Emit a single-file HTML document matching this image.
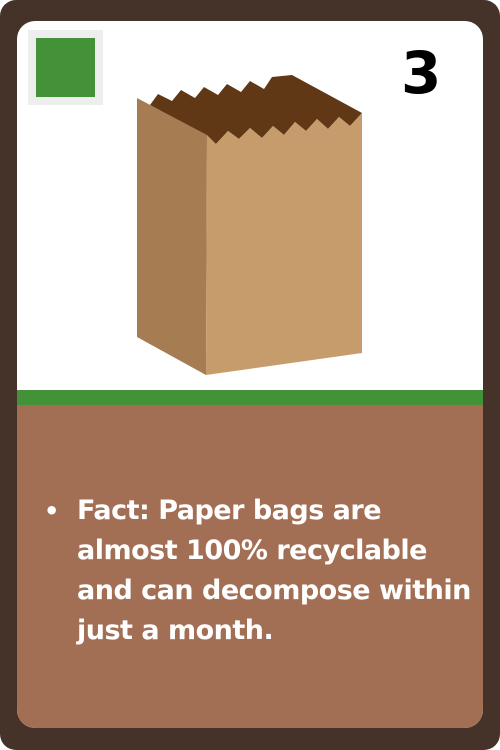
<!DOCTYPE html>
<html><head><style>
html,body{margin:0;padding:0;width:500px;height:750px;overflow:hidden;background:#fff}
.card{position:absolute;left:0;top:0;width:500px;height:750px;background:#45332a;border-radius:16px}
.inner{position:absolute;left:17px;top:21px;width:466px;height:707px;background:#fff;border-radius:18px;overflow:hidden}
.green{position:absolute;left:0;top:369px;width:466px;height:15px;background:#439238}
.bottom{position:absolute;left:0;top:384px;width:466px;height:330px;background:#a36f54}
.sq{position:absolute;left:11px;top:9px;width:75px;height:75px;background:#eeeeee}
.sq div{position:absolute;left:8px;top:8px;width:59px;height:59px;background:#439238}
.num{position:absolute;left:384px;top:22px;font:bold 58px "DejaVu Sans",sans-serif;color:#000;line-height:60px}
.txt{position:absolute;left:60px;top:470px;width:410px;color:#fff;font:bold 27px/40px "DejaVu Sans",sans-serif;letter-spacing:-0.5px}
.bul{position:absolute;left:27px;top:470px;color:#fff;font:bold 24px/40px "DejaVu Sans",sans-serif}
</style></head><body>
<div class="card"><div class="inner">
<div class="sq"><div></div></div>
<div class="num">3</div>
<svg style="position:absolute;left:-17px;top:-21px" width="500" height="420">
<polygon points="150,105 158,94 172,101 181,90 195,98 204,87 218,95 227,84 241,92 250,81 264,89 272,77 292,75 362,113 350,126 339,117 328,129 317,119 306,131 295,122 284,135 273,126 262,138 250,128 239,139 228,131 216,144" fill="#603816"/>
<polygon points="137,98 207,135 206,375 137,337" fill="#a67c52"/>
<polygon points="207,135 216,144 228,131 239,139 250,128 262,138 273,126 284,135 295,122 306,131 317,119 328,129 339,117 350,126 362,113 362,353 206,375" fill="#c69c6d"/>
</svg>
<div class="green"></div>
<div class="bottom"></div>
<div class="bul">•</div>
<div class="txt">Fact: Paper bags are almost 100% recyclable and can decompose within just a month.</div>
</div></div>
</body></html>
